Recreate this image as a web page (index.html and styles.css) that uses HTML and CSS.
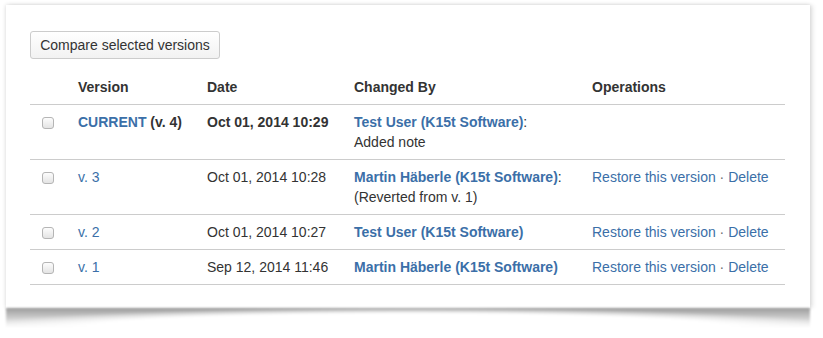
FILE: index.html
```html
<!DOCTYPE html>
<html lang="en">
<head>
    <meta charset="UTF-8">
    <title>Page History</title>
    <link rel="stylesheet" href="styles.css">
</head>
<body>
    <div class="page">
        <div class="card">
            <button class="button">Compare selected versions</button>
            <table class="history">
                <colgroup>
                    <col class="col-check">
                    <col class="col-version">
                    <col class="col-date">
                    <col class="col-author">
                    <col class="col-ops">
                </colgroup>
                <thead>
                    <tr>
                        <th></th>
                        <th>Version</th>
                        <th>Date</th>
                        <th>Changed By</th>
                        <th>Operations</th>
                    </tr>
                </thead>
                <tbody>
                    <tr class="current">
                        <td><input type="checkbox" class="check"></td>
                        <td><a href="#">CURRENT</a> (v. 4)</td>
                        <td>Oct 01, 2014 10:29</td>
                        <td><a href="#" class="user">Test User (K15t Software)</a><span class="normal">:</span><br><span class="normal">Added note</span></td>
                        <td></td>
                    </tr>
                    <tr>
                        <td><input type="checkbox" class="check"></td>
                        <td><a href="#">v. 3</a></td>
                        <td>Oct 01, 2014 10:28</td>
                        <td><a href="#" class="user">Martin Häberle (K15t Software)</a>:<br>(Reverted from v. 1)</td>
                        <td><a href="#">Restore this version</a> <span class="dot">·</span> <a href="#">Delete</a></td>
                    </tr>
                    <tr>
                        <td><input type="checkbox" class="check"></td>
                        <td><a href="#">v. 2</a></td>
                        <td>Oct 01, 2014 10:27</td>
                        <td><a href="#" class="user">Test User (K15t Software)</a></td>
                        <td><a href="#">Restore this version</a> <span class="dot">·</span> <a href="#">Delete</a></td>
                    </tr>
                    <tr>
                        <td><input type="checkbox" class="check"></td>
                        <td><a href="#">v. 1</a></td>
                        <td>Sep 12, 2014 11:46</td>
                        <td><a href="#" class="user">Martin Häberle (K15t Software)</a></td>
                        <td><a href="#">Restore this version</a> <span class="dot">·</span> <a href="#">Delete</a></td>
                    </tr>
                </tbody>
            </table>
        </div>
        <div class="curl"></div>
    </div>
</body>
</html>
```
FILE: styles.css
```css
body {
    margin: 0;
    background-color: #fff;
    font-family: "Liberation Sans", Arial, Helvetica, sans-serif;
    font-size: 14px;
    color: #333;
}
.page {
    padding: 5px 13px 0 6px;
}
.card {
    width: 804px;
    height: 303px;
    box-sizing: border-box;
    padding: 26px 25px 22px 24px;
    background-color: #fff;
    box-shadow: 0 0 4px rgba(0, 0, 0, 0.18), 4px 0 4px rgba(0, 0, 0, 0.06);
}
.curl {
    width: 804px;
    height: 20px;
    background:
        radial-gradient(ellipse 56% 100% at 50% 100%, #fff 72%, rgba(255, 255, 255, 0) 100%),
        linear-gradient(to bottom, #9c9c9c, #c4c4c4 40%, #fff);
    filter: blur(1px);
}
.button {
    display: block;
    width: 190px;
    height: 28px;
    padding: 0;
    white-space: nowrap;
    font-family: inherit;
    font-size: 14px;
    color: #333;
    border: 1px solid #ccc;
    border-radius: 3px;
    background: linear-gradient(#fff, #f2f2f2);
    cursor: pointer;
}
.history {
    width: 755px;
    margin-top: 11px;
    border-collapse: collapse;
    table-layout: fixed;
}
.col-check { width: 38px; }
.col-version { width: 129px; }
.col-date { width: 147px; }
.col-author { width: 238px; }
.col-ops { width: 203px; }
.history th,
.history td {
    padding: 7px 10px 7px 10px;
    line-height: 20px;
    text-align: left;
    vertical-align: top;
    border-bottom: 1px solid #ccc;
    white-space: nowrap;
}
.history th {
    font-weight: bold;
}
.history td:first-child {
    padding-left: 12px;
}
.check {
    -webkit-appearance: none;
    appearance: none;
    display: block;
    margin: 5px 0 0 0;
    width: 12px;
    height: 12px;
    border: 1px solid #b5b5b5;
    border-radius: 3px;
    background: linear-gradient(#fdfdfd, #e4e4e4);
}
.history a {
    color: #3b6fa8;
    text-decoration: none;
}
.history .user {
    font-weight: bold;
}
.current td {
    font-weight: bold;
}
.current .normal {
    font-weight: normal;
}
.dot {
    color: #707070;
}
```
